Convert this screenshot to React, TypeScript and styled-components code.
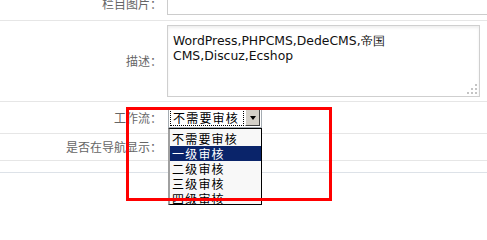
import styled, { createGlobalStyle } from "styled-components";

const GlobalStyle = createGlobalStyle`
  html, body {
    margin: 0;
    padding: 0;
    background: #fff;
    overflow: hidden;
  }
  body {
    font-family: "Noto Sans CJK SC", "DejaVu Sans", sans-serif;
    font-size: 12px;
  }
`;

const Page = styled.div`
  position: relative;
  width: 487px;
  height: 214px;
  overflow: hidden;
`;

const Form = styled.div`
  margin-top: -12px;
`;

const Row = styled.div<{ $pad?: number; $h?: number; $line?: string }>`
  display: flex;
  align-items: center;
  gap: 5px;
  padding: ${(p) => p.$pad ?? 0}px 0;
  min-height: ${(p) => p.$h ?? 0}px;
  border-bottom: 1px solid ${(p) => p.$line ?? "#e6e6e6"};
  box-sizing: content-box;
`;

const Label = styled.div`
  width: 162px;
  flex: none;
  text-align: right;
  color: #666;
  font-size: 12px;
  line-height: 16px;
  white-space: nowrap;
`;

const TextInput = styled.div`
  width: 340px;
  height: 22px;
  box-sizing: border-box;
  border: 1px solid #ccc;
  flex: none;
`;

const MemoWrap = styled.div`
  position: relative;
  width: 313px;
  height: 72px;
  flex: none;
`;

const Memo = styled.textarea`
  display: block;
  width: 100%;
  height: 100%;
  box-sizing: border-box;
  margin: 0;
  border: 1px solid #cfcfcf;
  box-shadow: inset 0 2px 3px rgba(0, 0, 0, 0.07);
  padding: 7px 5px;
  font-family: "DejaVu Sans", Verdana, sans-serif;
  font-size: 12.4px;
  line-height: 15px;
  color: #111;
  resize: none;
  outline: none;
  overflow: hidden;
`;

const Grip = styled.svg`
  position: absolute;
  right: 3px;
  bottom: 3px;
`;

const SelectWrap = styled.div`
  position: relative;
  flex: none;
  margin-left: 1px;
`;

const SelectBox = styled.div`
  display: flex;
  width: 94px;
  height: 21px;
  box-sizing: border-box;
  border: 1px solid #a5acb2;
  background: #fff;
  padding: 1px;
`;

const SelectValue = styled.div`
  flex: 1;
  border: 1px dotted #000;
  font-size: 12px;
  letter-spacing: 1.2px;
  line-height: 15px;
  color: #000;
  padding-left: 2px;
  white-space: nowrap;
  overflow: hidden;
`;

const SelectButton = styled.div`
  width: 15px;
  flex: none;
  margin-left: 1px;
  background: #d4d0c8;
  box-sizing: border-box;
  border-top: 1px solid #fff;
  border-left: 1px solid #fff;
  border-right: 1px solid #404040;
  border-bottom: 1px solid #404040;
  display: flex;
  align-items: center;
  justify-content: center;
`;

const Arrow = styled.div`
  width: 0;
  height: 0;
  border-left: 3.5px solid transparent;
  border-right: 3.5px solid transparent;
  border-top: 4px solid #000;
`;

const DropList = styled.div`
  position: absolute;
  top: 100%;
  left: 0;
  width: 94px;
  height: 77px;
  box-sizing: border-box;
  background: #f8f8f8;
  border: 1px solid #000;
  border-left: 2px solid #a0a0a0;
  padding-top: 2px;
  overflow: hidden;
  z-index: 2;
`;

const Option = styled.div<{ $active?: boolean }>`
  height: 15px;
  line-height: 15px;
  font-size: 12px;
  letter-spacing: 1.2px;
  padding-left: 2px;
  white-space: nowrap;
  overflow: hidden;
  color: ${(p) => (p.$active ? "#fff" : "#000")};
  background: ${(p) => (p.$active ? "#0a246a" : "transparent")};
`;

const Highlight = styled.div`
  position: absolute;
  left: 126px;
  top: 107px;
  width: 206px;
  height: 94px;
  box-sizing: border-box;
  border: 3px solid #ff0000;
  z-index: 3;
  pointer-events: none;
`;

const options = ["不需要审核", "一级审核", "二级审核", "三级审核", "四级审核"];

export default function App() {
  return (
    <Page>
      <GlobalStyle />
      <Form>
        <Row $pad={5}>
          <Label>栏目图片：</Label>
          <TextInput />
        </Row>

        <Row $pad={4}>
          <Label>描述：</Label>
          <MemoWrap>
            <Memo readOnly defaultValue="WordPress,PHPCMS,DedeCMS,帝国CMS,Discuz,Ecshop" />
            <Grip width="10" height="10" viewBox="0 0 10 10">
              <rect x="8" y="0" width="2" height="2" fill="#c4c4c4" />
              <rect x="4" y="4" width="2" height="2" fill="#c4c4c4" />
              <rect x="8" y="4" width="2" height="2" fill="#c4c4c4" />
              <rect x="0" y="8" width="2" height="2" fill="#c4c4c4" />
              <rect x="4" y="8" width="2" height="2" fill="#c4c4c4" />
              <rect x="8" y="8" width="2" height="2" fill="#c4c4c4" />
            </Grip>
          </MemoWrap>
        </Row>

        <Row $pad={5}>
          <Label>工作流：</Label>
          <SelectWrap>
            <SelectBox>
              <SelectValue>不需要审核</SelectValue>
              <SelectButton>
                <Arrow />
              </SelectButton>
            </SelectBox>
            <DropList>
              {options.map((o, i) => (
                <Option key={o} $active={i === 1}>
                  {o}
                </Option>
              ))}
            </DropList>
          </SelectWrap>
        </Row>

        <Row $h={26}>
          <Label>是否在导航显示：</Label>
        </Row>

        <Row $h={11} $line="#dde2e8" />
      </Form>
      <Highlight />
    </Page>
  );
}
